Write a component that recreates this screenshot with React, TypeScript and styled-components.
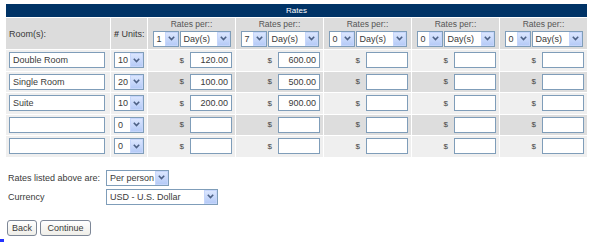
import React from 'react'
import styled, { createGlobalStyle } from 'styled-components'

const GlobalStyle = createGlobalStyle`
  html, body {
    margin: 0;
    padding: 0;
    background: #fff;
  }
  body {
    font-family: "Liberation Sans", Arial, sans-serif;
    font-size: 9px;
    color: #3a3a3a;
  }
`

const Page = styled.div`
  width: 600px;
  height: 246px;
  box-sizing: border-box;
  padding: 3px 0 0 5px;
  overflow: hidden;
`

const RatesTable = styled.table`
  border-collapse: separate;
  border-spacing: 1px;
  table-layout: fixed;
  width: 583px;
`

const TitleCell = styled.th`
  background: #003366;
  color: #fff;
  font-weight: normal;
  font-size: 8px;
  height: 13px;
  padding: 0;
  text-align: center;
  line-height: 13px;
`

const HeadCell = styled.th<{ $align?: 'left' | 'center' }>`
  background: #dcdcdc;
  font-weight: normal;
  font-size: 9px;
  color: #3a3a3a;
  height: 31px;
  padding: 0 0 0 ${p => (p.$align === 'center' ? 0 : 3)}px;
  text-align: ${p => p.$align ?? 'left'};
  vertical-align: middle;
  box-sizing: border-box;
`

const RateHead = styled.div`
  display: flex;
  flex-direction: column;
  align-items: center;
  gap: 2px;
  padding-bottom: 2px;
`

const RateLabel = styled.span`
  color: #555;
  font-size: 8.5px;
  line-height: 10px;
`

const SelectPair = styled.div`
  display: flex;
  gap: 1px;
`

const Cell = styled.td<{ $shade?: boolean; $rate?: boolean }>`
  background: ${p => (p.$shade ? '#dddddd' : '#efefef')};
  height: 20.5px;
  padding: ${p => (p.$rate ? '0 3px 0 0' : '0 0 0 3px')};
  text-align: ${p => (p.$rate ? 'right' : 'left')};
  vertical-align: middle;
  box-sizing: border-box;
`

const TextInput = styled.span<{ $width: number; $right?: boolean }>`
  display: inline-flex;
  align-items: center;
  justify-content: ${p => (p.$right ? 'flex-end' : 'flex-start')};
  width: ${p => p.$width}px;
  height: 16px;
  box-sizing: border-box;
  border: 1px solid #7f9db9;
  background: #fff;
  padding: 0 3px;
  color: #3a3a3a;
  font-size: 9px;
  vertical-align: middle;
  white-space: nowrap;
`

const Dollar = styled.span`
  display: inline-block;
  margin-right: 6px;
  font-size: 8px;
  color: #444;
  vertical-align: middle;
`

const SelectBox = styled.span<{ $width: number }>`
  display: inline-flex;
  align-items: center;
  width: ${p => p.$width}px;
  height: 16px;
  box-sizing: border-box;
  border: 1px solid #7f9db9;
  background: #fff;
  vertical-align: middle;
  text-align: left;
`

const SelectValue = styled.span`
  flex: 1;
  padding-left: 3px;
  color: #3a3a3a;
  font-size: 9px;
  white-space: nowrap;
  overflow: hidden;
`

const SelectArrow = styled.span`
  display: flex;
  align-items: center;
  justify-content: center;
  width: 13px;
  height: 14px;
  box-sizing: border-box;
  border: 1px solid #c6d6fb;
  background: linear-gradient(#dbe6fe, #b6cbf7);
`

const Form = styled.div`
  display: grid;
  grid-template-columns: 98px auto;
  align-items: center;
  row-gap: 3px;
  margin: 12px 0 0 3px;
  justify-items: start;
`

const Label = styled.span`
  color: #3a3a3a;
  font-size: 9px;
`

const Buttons = styled.div`
  display: flex;
  gap: 3px;
  margin: 15px 0 0 2px;
`

const Button = styled.button<{ $width: number }>`
  width: ${p => p.$width}px;
  height: 16px;
  padding: 0;
  font-family: inherit;
  font-size: 9px;
  color: #3a3a3a;
  border: 1px solid #7d8797;
  border-radius: 3px;
  background: linear-gradient(#ffffff, #efeee8);
`

const Cursor = styled.div`
  width: 4px;
  height: 3px;
  margin: 3px 0 0 -5px;
  background: #2433ff;
`

function Select({ width, value }: { width: number; value: string }) {
  return (
    <SelectBox $width={width}>
      <SelectValue>{value}</SelectValue>
      <SelectArrow>
        <svg width="7" height="5" viewBox="0 0 7 5">
          <polyline points="0.8,0.8 3.5,3.6 6.2,0.8" fill="none" stroke="#4d6185" strokeWidth="1.6" />
        </svg>
      </SelectArrow>
    </SelectBox>
  )
}

const periods = ['1', '7', '0', '0', '0']

const rooms = [
  { name: 'Double Room', units: '10', rates: ['120.00', '600.00', '', '', ''] },
  { name: 'Single Room', units: '20', rates: ['100.00', '500.00', '', '', ''] },
  { name: 'Suite', units: '10', rates: ['200.00', '900.00', '', '', ''] },
  { name: '', units: '0', rates: ['', '', '', '', ''] },
  { name: '', units: '0', rates: ['', '', '', '', ''] },
]

export default function App() {
  return (
    <Page>
      <GlobalStyle />
      <RatesTable>
        <colgroup>
          <col style={{ width: 104 }} />
          <col style={{ width: 36 }} />
          {periods.map((_, i) => (
            <col key={i} style={{ width: 87 }} />
          ))}
        </colgroup>
        <thead>
          <tr>
            <TitleCell colSpan={7}>Rates</TitleCell>
          </tr>
          <tr>
            <HeadCell>Room(s):</HeadCell>
            <HeadCell>
              <b>#</b> Units:
            </HeadCell>
            {periods.map((p, i) => (
              <HeadCell key={i} $align="center">
                <RateHead>
                  <RateLabel>Rates per::</RateLabel>
                  <SelectPair>
                    <Select width={26} value={p} />
                    <Select width={51} value="Day(s)" />
                  </SelectPair>
                </RateHead>
              </HeadCell>
            ))}
          </tr>
        </thead>
        <tbody>
          {rooms.map((room, r) => (
            <tr key={r}>
              <Cell>
                <TextInput $width={96}>{room.name}</TextInput>
              </Cell>
              <Cell>
                <Select width={30} value={room.units} />
              </Cell>
              {room.rates.map((rate, i) => (
                <Cell key={i} $rate $shade={r % 2 === 1}>
                  <Dollar>$</Dollar>
                  <TextInput $width={42} $right>
                    {rate}
                  </TextInput>
                </Cell>
              ))}
            </tr>
          ))}
        </tbody>
      </RatesTable>
      <Form>
        <Label>Rates listed above are:</Label>
        <Select width={63} value="Per person" />
        <Label>Currency</Label>
        <Select width={112} value="USD - U.S. Dollar" />
      </Form>
      <Buttons>
        <Button $width={30}>Back</Button>
        <Button $width={51}>Continue</Button>
      </Buttons>
      <Cursor />
    </Page>
  )
}
